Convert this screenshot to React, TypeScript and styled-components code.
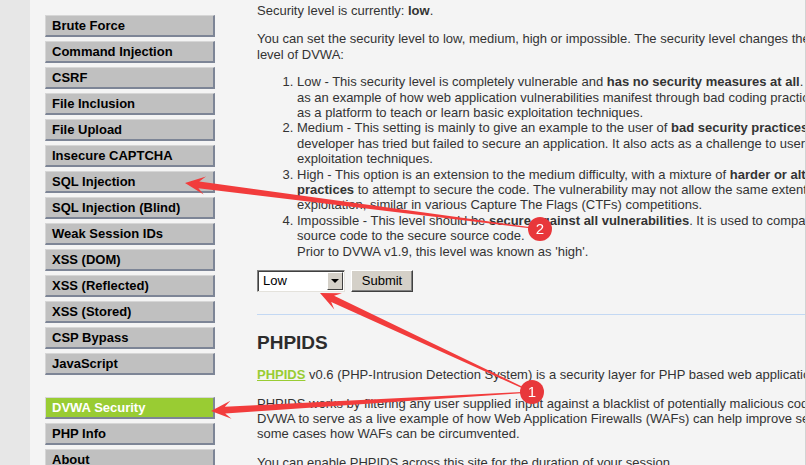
import React from "react";
import styled, { createGlobalStyle } from "styled-components";

const vulnMenu = [
  "Brute Force",
  "Command Injection",
  "CSRF",
  "File Inclusion",
  "File Upload",
  "Insecure CAPTCHA",
  "SQL Injection",
  "SQL Injection (Blind)",
  "Weak Session IDs",
  "XSS (DOM)",
  "XSS (Reflected)",
  "XSS (Stored)",
  "CSP Bypass",
  "JavaScript",
];

const setupMenu = ["DVWA Security", "PHP Info", "About"];

type Pt = [number, number];

// tapered annotation arrow, thin at the bubble and thick at the head
const arrowPoints = (start: Pt, tip: Pt, headLen = 20, headHalf = 9, neck = 3.4, tail = 0.6) => {
  const dx = start[0] - tip[0];
  const dy = start[1] - tip[1];
  const len = Math.hypot(dx, dy);
  const ux = dx / len;
  const uy = dy / len;
  const nx = -uy;
  const ny = ux;
  const at = (d: number, w: number): string =>
    `${(tip[0] + ux * d + nx * w).toFixed(1)},${(tip[1] + uy * d + ny * w).toFixed(1)}`;
  return [
    at(0, 0),
    at(headLen, headHalf),
    at(headLen * 0.7, neck),
    at(len, tail),
    at(len, -tail),
    at(headLen * 0.7, -neck),
    at(headLen, -headHalf),
  ].join(" ");
};

const App = () => {
  return (
    <>
      <GlobalStyle />
      <Shell>
        <Gutter />
        <Container>
          <Sidebar>
            <MenuBlock>
              {vulnMenu.map((item) => (
                <MenuButton key={item}>{item}</MenuButton>
              ))}
            </MenuBlock>
            <MenuBlock>
              {setupMenu.map((item) => (
                <MenuButton key={item} selected={item === "DVWA Security"}>
                  {item}
                </MenuButton>
              ))}
            </MenuBlock>
          </Sidebar>
          <Body>
            <Para first>
              Security level is currently: <b>low</b>.
            </Para>
            <Para>
              You can set the security level to low, medium, high or impossible. The security level changes the vulnerability
              <br />
              level of DVWA:
            </Para>
            <Levels>
              <li>
                Low - This security level is completely vulnerable and <b>has no security measures at all</b>. It's use is to be
                <br />
                as an example of how web application vulnerabilities manifest through bad coding practices and to serve
                <br />
                as a platform to teach or learn basic exploitation techniques.
              </li>
              <li>
                Medium - This setting is mainly to give an example to the user of <b>bad security practices</b>, where the
                <br />
                developer has tried but failed to secure an application. It also acts as a challenge to users to refine their
                <br />
                exploitation techniques.
              </li>
              <li>
                High - This option is an extension to the medium difficulty, with a mixture of <b>harder or alternative bad</b>
                <br />
                <b>practices</b> to attempt to secure the code. The vulnerability may not allow the same extent of the
                <br />
                exploitation, similar in various Capture The Flags (CTFs) competitions.
              </li>
              <li>
                Impossible - This level should be <b>secure against all vulnerabilities</b>. It is used to compare the vulnerable
                <br />
                source code to the secure source code.
                <br />
                Prior to DVWA v1.9, this level was known as 'high'.
              </li>
            </Levels>
            <LevelForm>
              <SelectBox>
                <span>Low</span>
                <DropButton>
                  <DropCaret />
                </DropButton>
              </SelectBox>
              <SubmitButton>Submit</SubmitButton>
            </LevelForm>
            <Rule />
            <Heading>PHPIDS</Heading>
            <Para>
              <Link>PHPIDS</Link> v0.6 (PHP-Intrusion Detection System) is a security layer for PHP based web applications.
            </Para>
            <Para>
              PHPIDS works by filtering any user supplied input against a blacklist of potentially malicious code. It is used in
              <br />
              DVWA to serve as a live example of how Web Application Firewalls (WAFs) can help improve security and in
              <br />
              some cases how WAFs can be circumvented.
            </Para>
            <Para>You can enable PHPIDS across this site for the duration of your session.</Para>
          </Body>
        </Container>
      </Shell>
      <Marks width="806" height="465" viewBox="0 0 806 465">
        <polygon points={arrowPoints([540, 229], [185, 183])} />
        <polygon points={arrowPoints([532, 392], [320, 293])} />
        <polygon points={arrowPoints([532, 392], [211, 411])} />
        <circle cx="540" cy="229" r="12" />
        <circle cx="532" cy="392" r="12" />
        <text x="540" y="234">2</text>
        <text x="532" y="397">1</text>
      </Marks>
    </>
  );
};

export default App;

const GlobalStyle = createGlobalStyle`
  html, body {
    margin: 0;
    padding: 0;
    background: #e7e7e7;
    overflow: hidden;
  }
  body {
    font-family: "Liberation Sans", Arial, sans-serif;
  }
`;

const Shell = styled.div`
  display: flex;
  width: 806px;
  height: 465px;
  overflow: hidden;
`;

const Gutter = styled.div`
  flex: none;
  width: 30px;
  background: #e7e7e7;
`;

const Container = styled.div`
  flex: 1;
  min-width: 0;
  display: flex;
  background: #f4f4f4;
  border-right: 1px solid #d2d2d2;
  overflow: hidden;
`;

const Sidebar = styled.nav`
  flex: none;
  width: 227px;
  box-sizing: border-box;
  padding: 15px 0 0 15px;
  display: flex;
  flex-direction: column;
  gap: 22px;
`;

const MenuBlock = styled.div`
  display: flex;
  flex-direction: column;
  gap: 4px;
  width: 170px;
`;

const MenuButton = styled.div<{ selected?: boolean }>`
  height: 22px;
  box-sizing: border-box;
  display: flex;
  align-items: center;
  padding-left: 6px;
  background: ${(p) => (p.selected ? "#99cc33" : "#c0c0c0")};
  color: ${(p) => (p.selected ? "#ffffff" : "#000000")};
  border-style: solid;
  border-width: 1px 2px 2px 1px;
  border-color: #d6d6d6 #7d8596 #7d8596 #d6d6d6;
  font-size: 13px;
  font-weight: bold;
  white-space: nowrap;
`;

const Body = styled.main`
  flex: none;
  width: 900px;
  padding-top: 3px;
  color: #333333;
  font-size: 13px;
  line-height: 15.4px;
  white-space: nowrap;
`;

const Para = styled.p<{ first?: boolean }>`
  margin: ${(p) => (p.first ? "0" : "13px")} 0 0;
`;

const Levels = styled.ol`
  margin: 12px 0 0;
  padding-left: 40px;
`;

const LevelForm = styled.form`
  display: flex;
  gap: 6px;
  margin-top: 11px;
`;

const SelectBox = styled.div`
  width: 88px;
  height: 22px;
  box-sizing: border-box;
  display: flex;
  align-items: center;
  justify-content: space-between;
  padding-left: 5px;
  background: #ffffff;
  border: 1px solid;
  border-color: #808080 #e4e2dc #e4e2dc #808080;
  box-shadow: inset 1px 1px 0 #404040;
  color: #000;
  font-size: 13px;
`;

const DropButton = styled.div`
  width: 16px;
  height: 18px;
  margin-right: 1px;
  box-sizing: border-box;
  display: flex;
  align-items: center;
  justify-content: center;
  background: #d4d0c8;
  border: 1px solid;
  border-color: #ffffff #404040 #404040 #ffffff;
`;

const DropCaret = styled.span`
  width: 0;
  height: 0;
  border-left: 4px solid transparent;
  border-right: 4px solid transparent;
  border-top: 4px solid #000;
`;

const SubmitButton = styled.div`
  width: 62px;
  height: 22px;
  box-sizing: border-box;
  display: flex;
  align-items: center;
  justify-content: center;
  background: #d4d0c8;
  border: 1px solid;
  border-color: #ffffff #404040 #404040 #ffffff;
  box-shadow: inset -1px -1px 0 #808080;
  color: #000;
  font-size: 13px;
`;

const Rule = styled.hr`
  margin: 22px 0 0;
  border: none;
  height: 1px;
  background: #c3d8f3;
`;

const Heading = styled.h2`
  margin: 17px 0 0;
  font-size: 19px;
  line-height: 22px;
  font-weight: bold;
  color: #2c2c2c;
`;

const Link = styled.span`
  color: #99cc33;
  font-weight: bold;
  text-decoration: underline;
`;

const Marks = styled.svg`
  position: fixed;
  left: 0;
  top: 0;
  pointer-events: none;

  polygon {
    fill: #f23c3c;
  }
  circle {
    fill: #e8373b;
  }
  text {
    fill: #ffffff;
    font-family: "Liberation Sans", Arial, sans-serif;
    font-size: 15px;
    text-anchor: middle;
  }
`;
